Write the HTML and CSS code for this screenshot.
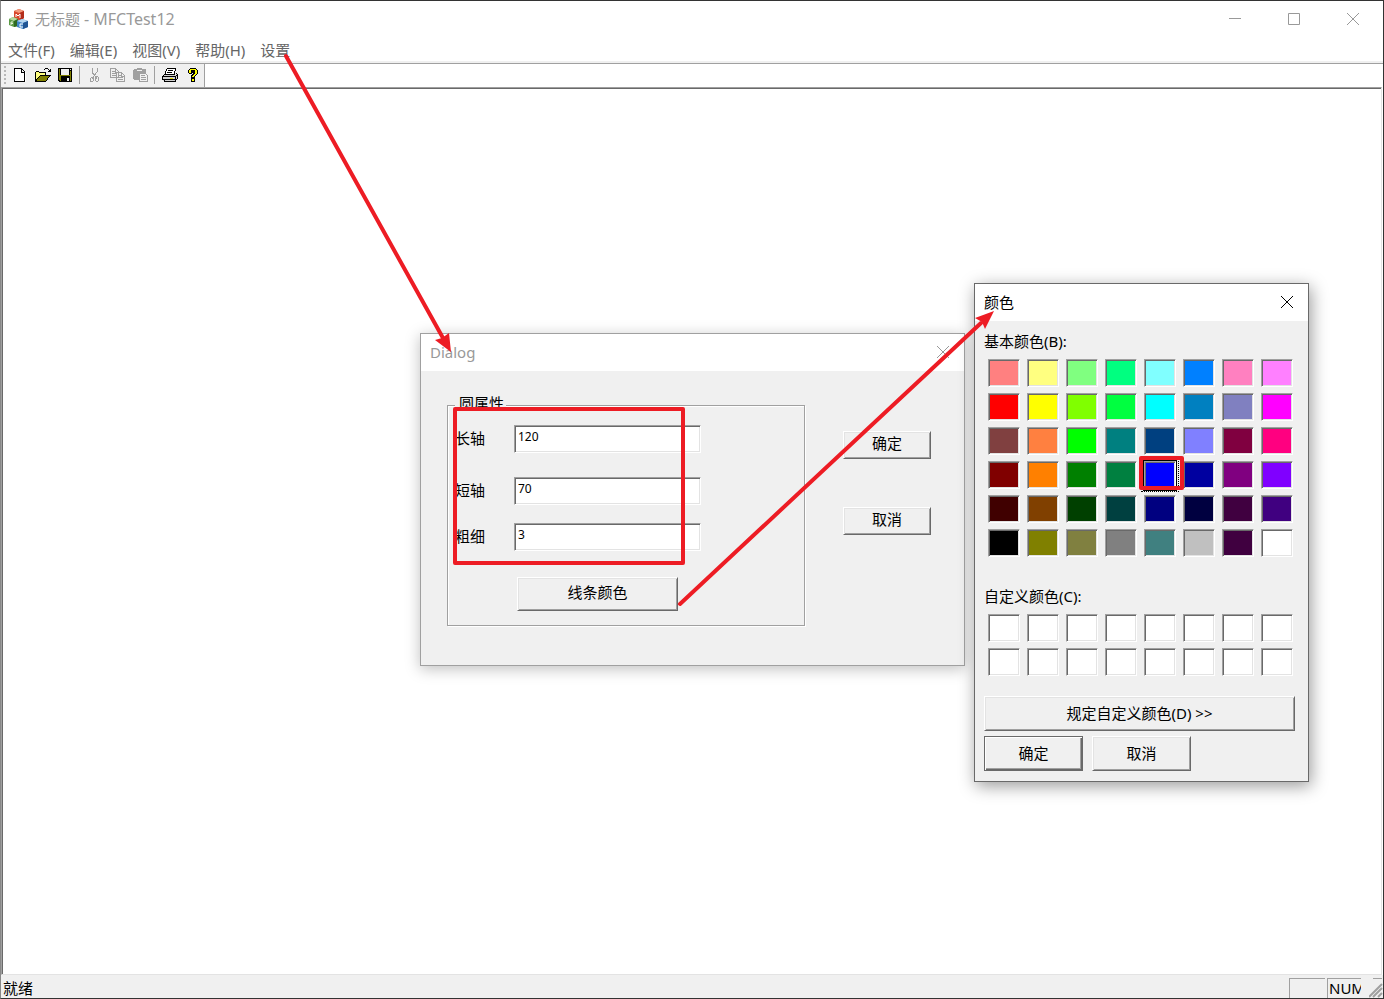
FILE: index.html
```html
<!DOCTYPE html>
<html lang="zh-CN">
<head>
<meta charset="utf-8">
<title>无标题 - MFCTest12</title>
<link rel="stylesheet" href="styles.css">
</head>
<body>
<div class="app">
  <header class="titlebar">
    <svg class="app-icon" width="20" height="20" viewBox="0 0 20 20" aria-hidden="true">
      <path d="M5 2l5-2 5 2v7l-5 3-5-3z" fill="#d8472b"/><path d="M5 2l5-2 5 2-5 2z" fill="#f19a7c"/><path d="M11 4l4-2v7l-4 3z" fill="#b32d1a"/>
      <path d="M0 10l4-2 5 2v7l-4 1-5-2z" fill="#5c9a45"/><path d="M0 10l4-2 5 2-4 2z" fill="#b5d8a0"/><path d="M5 12l4-2v7l-4 1z" fill="#2f6822"/>
      <path d="M8 12l5-2 6 2v6l-5 2-6-2z" fill="#3f83c6"/><path d="M8 12l5-2 6 2-5 2z" fill="#b4d6f0"/><path d="M14 14l5-2v6l-5 2z" fill="#205594"/>
      <path d="M7 8V5l2 2 2-2v4" fill="none" stroke="#fff"/>
      <path d="M2 16v-3h2M2 14.500h2" fill="none" stroke="#e4f2dc"/>
      <path d="M14 15h-3v3h3" fill="none" stroke="#fff"/>
    </svg>
    <h1 class="title">无标题 <span class="latin">- MFCTest12</span></h1>
    <div class="controls">
      <button class="ctl" aria-label="最小化"><svg width="12" height="13"><path d="M0 6.500h12"/></svg></button>
      <button class="ctl" aria-label="最大化"><svg width="12" height="12"><path d="M.5.5h11v11H.5z"/></svg></button>
      <button class="ctl" aria-label="关闭"><svg width="12" height="12"><path d="M0 0l12 12M12 0L0 12"/></svg></button>
    </div>
  </header>
  <nav class="menu">
    <button>文件(F)</button><button>编辑(E)</button><button>视图(V)</button><button>帮助(H)</button><button>设置</button>
  </nav>
  <div class="toolrow">
    <div class="toolbar" role="toolbar" aria-label="工具栏">
      <span class="grip"></span>
      <button class="tool" aria-label="新建"><svg width="16" height="15" shape-rendering="crispEdges"><path d="M2 0h8v4h4v10H2z" fill="#fff"/><path d="M2 0h8v1H2zM2 0h1v14H2zM2 13h11v1H2zM12 4h1v10h-1zM9 0h1v5H9zM9 4h4v1H9zM10 1h1v1h-1zM11 2h1v1h-1zM12 3h1v1h-1z"/></svg></button>
      <button class="tool" aria-label="打开"><svg width="16" height="15" shape-rendering="crispEdges"><path d="M1 4h4v1h6v3h4l-4 5H1z" fill="#ffff80"/><path d="M5 8h10l-4 5H1z" fill="#808000"/><path d="M1 3h3v1H1zM0 4h1v9H0zM4 4h7v1H4zM10 5h1v3h-1zM5 7h11v1H5zM4 8h1v1H4zM3 9h1v1H3zM2 10h1v1H2zM1 11h1v2H1zM0 13h11v1H0zM14 8h1v1h-1zM13 9h1v1h-1zM12 10h1v2h-1zM11 12h1v1h-1zM9 1h1v1H9zM10 0h3v1h-3zM13 1h1v1h-1zM14 2h2v1h-2zM13 3h3v1h-3zM15 1h1v3h-1z"/></svg></button>
      <button class="tool" aria-label="保存"><svg width="16" height="15" shape-rendering="crispEdges"><path d="M0 0h14v14H1l-1-1z"/><path d="M1 1h1v11H1zM12 3h1v10h-1zM2 7h10v1H2zM2 8h1v5H2z" fill="#808000"/><path d="M3 1h8v6H3zM12 1h1v1h-1zM9 10h2v3H9z" fill="#f0f0f0"/></svg></button>
      <span class="sep"></span>
      <button class="tool" aria-label="剪切" disabled><svg width="16" height="15" shape-rendering="crispEdges"><path d="M5 0v4l3 4 2 3M10 0v4L7 8l-2 3" fill="none" stroke="#a0a0a0"/><path d="M4 9h2v1H4zM3 10h1v4H3zM4 13h2v1H4zM6 10h1v3H6zM9 8h2v1H9zM8 9h1v4H8zM9 13h2v1H9zM11 9h1v4h-1z" fill="#a0a0a0"/></svg></button>
      <button class="tool" aria-label="复制" disabled><svg width="16" height="15" shape-rendering="crispEdges"><path d="M.5.5h5l3 3v6h-8zM6.500 4.500h5l3 3v6h-8z" fill="#f0f0f0" stroke="#a0a0a0"/><path d="M2 3h3v1H2zM2 5h4v1H2zM2 7h4v1H2zM8 7h3v1H8zM8 9h5v1H8zM8 11h5v1H8zM5 1h1v3h3v1H5zM11 5h1v3h3v1h-4z" fill="#a0a0a0"/></svg></button>
      <button class="tool" aria-label="粘贴" disabled><svg width="16" height="15" shape-rendering="crispEdges"><path d="M1 1h3V0h5v1h4v11H1L0 11V2z" fill="#a0a0a0"/><path d="M4 2h5v1H4z" fill="#f0f0f0"/><path d="M6.500 5.500h6l2 2v6h-8z" fill="#f0f0f0" stroke="#a0a0a0"/><path d="M8 7h4v1H8zM8 9h5v1H8zM8 11h5v1H8z" fill="#a0a0a0"/></svg></button>
      <span class="sep"></span>
      <button class="tool" aria-label="打印"><svg width="16" height="15" shape-rendering="crispEdges"><path d="M5 0h9l-2 6H3z" fill="#fff"/><path d="M1 7h12l2-2v6l-2 2H1z" fill="#d0d0d0"/><path d="M5 0h9v1H5zM4 1h1v2H4zM3 3h1v3H3zM13 1h1v2h-1zM12 3h1v3h-1zM6 2h5v1H6zM5 4h5v1H5zM2 6h11v1H2zM1 7h1v1H1zM0 8h14v1H0zM0 9h1v3H0zM13 9h1v4h-1zM14 5h1v1h-1zM15 6h1v5h-1zM14 7h1v1h-1zM14 11h1v1h-1zM0 11h14v1H0zM2 12h1v2H2zM2 13h12v1H2z"/><path d="M8 10h3v1H8z" fill="#e0d800"/></svg></button>
      <button class="tool" aria-label="帮助"><svg width="16" height="15" shape-rendering="crispEdges"><path d="M5 0h6v1h1v1h1v4h-1v1h-1v1h-1v2H6V7h1V6h1V5H7v1H4V5H3V2h1V1h1zM6 10h4v4H6z"/><path d="M5 1h6v1h1v4h-1v1h-1v1H9v1H7V8h1V7h1V6h1V2H6v3H4V2h1zM7 11h2v2H7z" fill="#ff0"/></svg></button>
    </div>
  </div>
  <main class="client"></main>
  <footer class="status">
    <span class="ready">就绪</span>
    <span class="pane"></span>
    <span class="pane num">NUM</span>
    <svg class="resize" width="14" height="20"><path d="M0 19L13 6M4 19l9-9M9 19l4-4" stroke="#a0a0a0" stroke-width="2"/><path d="M4 .5h9" stroke="#a0a0a0"/></svg>
  </footer>

  <section class="window props" role="dialog" aria-labelledby="props-title">
    <header class="win-head"><h2 id="props-title">Dialog</h2>
      <button class="win-close" aria-label="关闭"><svg width="12" height="12"><path d="M0 0l12 12M12 0L0 12"/></svg></button></header>
    <form class="props-body">
      <fieldset class="group">
        <legend>圆属性</legend>
        <div class="fields">
          <label for="major">长轴</label><input id="major" type="text" value="120">
          <label for="minor">短轴</label><input id="minor" type="text" value="70">
          <label for="thick">粗细</label><input id="thick" type="text" value="3">
          <button type="button" class="btn line-color">线条颜色</button>
        </div>
      </fieldset>
      <div class="actions">
        <button type="button" class="btn">确定</button>
        <button type="button" class="btn">取消</button>
      </div>
    </form>
  </section>

  <section class="window colors" role="dialog" aria-labelledby="colors-title">
    <header class="win-head"><h2 id="colors-title">颜色</h2>
      <button class="win-close" aria-label="关闭"><svg width="12" height="12"><path d="M0 0l12 12M12 0L0 12"/></svg></button></header>
    <div class="colors-body">
      <h3>基本颜色(B):</h3>
      <div class="swatches basic">
        <button style="--c:#ff8080"></button><button style="--c:#ffff80"></button><button style="--c:#80ff80"></button><button style="--c:#00ff80"></button><button style="--c:#80ffff"></button><button style="--c:#0080ff"></button><button style="--c:#ff80c0"></button><button style="--c:#ff80ff"></button>
        <button style="--c:#ff0000"></button><button style="--c:#ffff00"></button><button style="--c:#80ff00"></button><button style="--c:#00ff40"></button><button style="--c:#00ffff"></button><button style="--c:#0080c0"></button><button style="--c:#8080c0"></button><button style="--c:#ff00ff"></button>
        <button style="--c:#804040"></button><button style="--c:#ff8040"></button><button style="--c:#00ff00"></button><button style="--c:#008080"></button><button style="--c:#004080"></button><button style="--c:#8080ff"></button><button style="--c:#800040"></button><button style="--c:#ff0080"></button>
        <button style="--c:#800000"></button><button style="--c:#ff8000"></button><button style="--c:#008000"></button><button style="--c:#008040"></button><button class="selected" style="--c:#0000ff"></button><button style="--c:#0000a0"></button><button style="--c:#800080"></button><button style="--c:#8000ff"></button>
        <button style="--c:#400000"></button><button style="--c:#804000"></button><button style="--c:#004000"></button><button style="--c:#004040"></button><button style="--c:#000080"></button><button style="--c:#000040"></button><button style="--c:#400040"></button><button style="--c:#400080"></button>
        <button style="--c:#000000"></button><button style="--c:#808000"></button><button style="--c:#808040"></button><button style="--c:#808080"></button><button style="--c:#408080"></button><button style="--c:#c0c0c0"></button><button style="--c:#400040"></button><button style="--c:#ffffff"></button>
      </div>
      <h3>自定义颜色(C):</h3>
      <div class="swatches custom">
        <button></button><button></button><button></button><button></button><button></button><button></button><button></button><button></button>
        <button></button><button></button><button></button><button></button><button></button><button></button><button></button><button></button>
      </div>
      <button class="btn define">规定自定义颜色(D) &gt;&gt;</button>
      <div class="confirm">
        <button class="btn default">确定</button>
        <button class="btn">取消</button>
      </div>
    </div>
  </section>

  <svg class="notes" aria-hidden="true">
    <g fill="none" stroke="#ed1c24" stroke-width="4">
      <path d="M286 56L443 338M680 604L981 323" stroke-linecap="round"/>
      <path d="M455 409h228v154H455zM1141 458h41v30h-41z" stroke-linejoin="round"/>
    </g>
    <path d="M451 352l-16-12 7-2 7-5zM994 311l-19 7 7 4 3 7z" fill="#ed1c24"/>
  </svg>
</div>
</body>
</html>
```
FILE: styles.css
```css
* { box-sizing: border-box; }
body {
  margin: 0;
  font: 15px/20px "Noto Sans", "Noto Sans CJK SC", sans-serif;
  color: #000;
}
h1, h2, h3 { margin: 0; font-size: 15px; font-weight: 400; }
button { font: inherit; color: inherit; padding: 0; border: 0; background: none; }
svg { display: block; }

.app {
  position: relative;
  display: flex;
  flex-direction: column;
  min-height: 100vh;
  overflow: hidden;
  background: #fff;
  border: 1px solid #333;
  border-left-color: #888;
}

.titlebar { display: flex; align-items: center; height: 37px; padding: 0 1px 2px 8px; color: #999; }
.title { margin-left: 6px; flex: 1; }
.latin { font-size: 16px; }
.controls { display: flex; }
.ctl { width: 59px; height: 35px; display: grid; place-items: center; }
.ctl svg, .win-close svg { fill: none; stroke: currentColor; }

.menu { display: flex; gap: 15px; height: 23px; padding-left: 7px; color: #666; }

.toolrow { border-top: 2px solid #f0f0f0; box-shadow: inset 0 1px #a0a0a0; }
.toolbar {
  display: inline-flex;
  align-items: center;
  vertical-align: top;
  height: 24px;
  padding: 0 0 1px 3px;
  background: #f0f0f0;
  border-top: 1px solid #a0a0a0;
  border-right: 1px solid #a0a0a0;
}
.grip { width: 4px; height: 18px; border-left: 2px dotted #b8b8b8; }
.tool { width: 23px; height: 22px; display: grid; place-items: center; }
.sep { width: 4px; height: 18px; margin-left: 2px; border-left: 1px solid #a0a0a0; }

.client {
  flex: 1;
  margin-right: 1px;
  border: 1px solid #a0a0a0;
  border-color: #a0a0a0 #e3e3e3 #e3e3e3 #a0a0a0;
  box-shadow: inset 1px 1px #696969;
}

.status { display: flex; height: 23px; padding-top: 3px; background: #f0f0f0; }
.ready { flex: 1; padding-left: 2px; }
.pane { width: 36px; margin-right: 2px; border: 1px solid #a0a0a0; border-width: 1px 0 0 1px; }
.num { width: 34px; padding-left: 1px; margin-right: 8px; line-height: 18px; overflow: hidden; }

.window { position: absolute; background: #f0f0f0; border: 1px solid #a0a0a0; }
.props { left: 419px; top: 332px; box-shadow: 0 3px 14px rgba(0, 0, 0, .25); }
.colors { left: 973px; top: 282px; border-color: #696969; box-shadow: 2px 4px 16px rgba(0, 0, 0, .4); }
.win-head { display: flex; align-items: center; justify-content: space-between; height: 37px; padding: 0 15px 1px 9px; background: #fff; }
.win-close { width: 12px; height: 12px; }
.props .win-head { color: #999; }

.btn {
  height: 28px;
  padding-bottom: 2px;
  background: #f0f0f0;
  border: 1px solid;
  border-color: #fff #696969 #696969 #fff;
  box-shadow: inset 1px 1px #e3e3e3, inset -1px -1px #a0a0a0;
}

.props-body { display: flex; gap: 38px; padding: 26px 33px 39px 26px; }
.props .btn { padding-bottom: 4px; }
.group {
  width: 358px;
  margin: 0;
  padding: 12px 7px 14px;
  border: 1px solid #a0a0a0;
  box-shadow: 1px 1px #fff, inset 1px 1px #fff;
}
.group legend { height: 16px; padding: 0 2px 0 4px; line-height: 12px; background: #f0f0f0; }
.fields { display: grid; grid-template-columns: 59px 187px; grid-template-rows: 52px 46px 54px 34px; }
.fields label { line-height: 26px; }
.fields input {
  height: 28px;
  padding: 0 3px 6px;
  font: 12px/20px "Noto Sans", sans-serif;
  background: #fff;
  border: 1px solid;
  border-color: #a0a0a0 #fff #fff #a0a0a0;
  border-radius: 0;
  box-shadow: inset 1px 1px #696969, inset -1px -1px #e3e3e3;
}
.fields .line-color { grid-column: 2; width: 161px; height: 34px; margin-left: 3px; }
.actions { display: flex; flex-direction: column; gap: 48px; padding-top: 34px; }
.actions .btn { width: 88px; }

.colors-body { padding: 10px 13px 10px 9px; }
.swatches {
  display: grid;
  grid-template-columns: repeat(8, 32px);
  gap: 6px 7px;
  padding: 8px 0 0 4px;
}
.swatches button {
  height: 28px;
  background: var(--c, #fff);
  border: 1px solid;
  border-color: #a0a0a0 #fff #fff #a0a0a0;
  box-shadow: inset 1px 1px #696969, inset -1px -1px #e3e3e3;
}
.swatches .selected {
  position: relative;
  box-shadow: inset 1px 1px #696969, inset -1px -1px #e3e3e3, 0 0 0 1px #000, 0 1px 0 1px #000;
  outline: 1px dotted #000;
  outline-offset: 2px;
}
.basic { margin-bottom: 29px; }
.custom { margin-bottom: 20px; }
.define { display: block; width: 311px; height: 35px; }
.confirm { display: flex; gap: 9px; margin-top: 5px; }
.confirm .btn { width: 99px; height: 35px; }
.confirm .default {
  border-color: #696969;
  box-shadow: inset 1px 1px #fff, inset -1px -1px #696969, inset -2px -2px #a0a0a0;
}

.notes { position: absolute; left: -1px; top: -1px; width: calc(100% + 2px); height: calc(100% + 2px); pointer-events: none; }
```
